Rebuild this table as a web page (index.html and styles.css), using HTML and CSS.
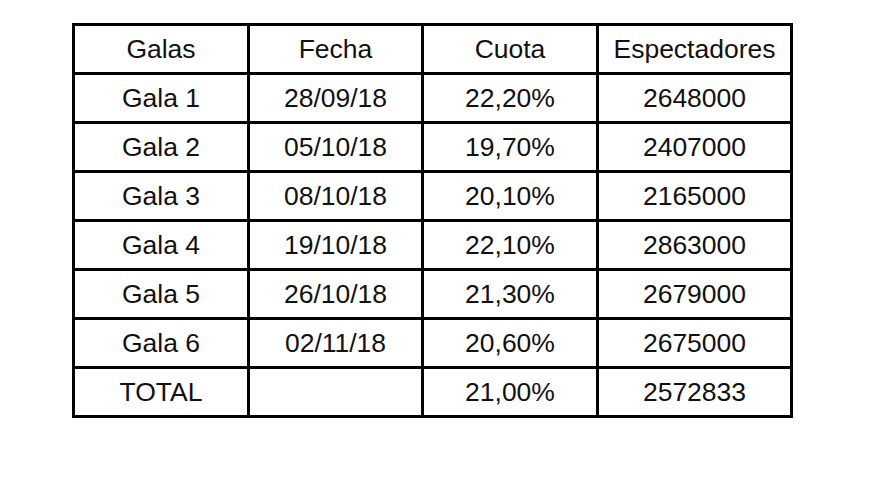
FILE: index.html
```html
<!DOCTYPE html>
<html lang="es">
<head>
<meta charset="utf-8">
<link rel="stylesheet" href="styles.css">
</head>
<body>
<table class="galas">
  <colgroup>
    <col class="c1"><col class="c2"><col class="c3"><col class="c4">
  </colgroup>
  <tr><td>Galas</td><td>Fecha</td><td>Cuota</td><td>Espectadores</td></tr>
  <tr><td>Gala 1</td><td>28/09/18</td><td>22,20%</td><td>2648000</td></tr>
  <tr><td>Gala 2</td><td>05/10/18</td><td>19,70%</td><td>2407000</td></tr>
  <tr><td>Gala 3</td><td>08/10/18</td><td>20,10%</td><td>2165000</td></tr>
  <tr><td>Gala 4</td><td>19/10/18</td><td>22,10%</td><td>2863000</td></tr>
  <tr><td>Gala 5</td><td>26/10/18</td><td>21,30%</td><td>2679000</td></tr>
  <tr><td>Gala 6</td><td>02/11/18</td><td>20,60%</td><td>2675000</td></tr>
  <tr><td>TOTAL</td><td></td><td>21,00%</td><td>2572833</td></tr>
</table>
</body>
</html>
```

FILE: styles.css
```css
html, body {
  margin: 0;
  background: #fff;
}
body {
  padding: 23px 0 0 72px;
  font-family: "Liberation Sans", Arial, sans-serif;
  color: #111;
}
.galas {
  border-collapse: collapse;
  table-layout: fixed;
  width: 718px;
  border: 3px solid #000;
}
.c1 { width: 175px; }
.c2 { width: 174px; }
.c3 { width: 175px; }
.c4 { width: 194px; }
.galas td {
  border: 3px solid #000;
  height: 46px;
  padding: 0;
  text-align: center;
  vertical-align: middle;
  font-size: 26.5px;
  line-height: 1;
}
```
